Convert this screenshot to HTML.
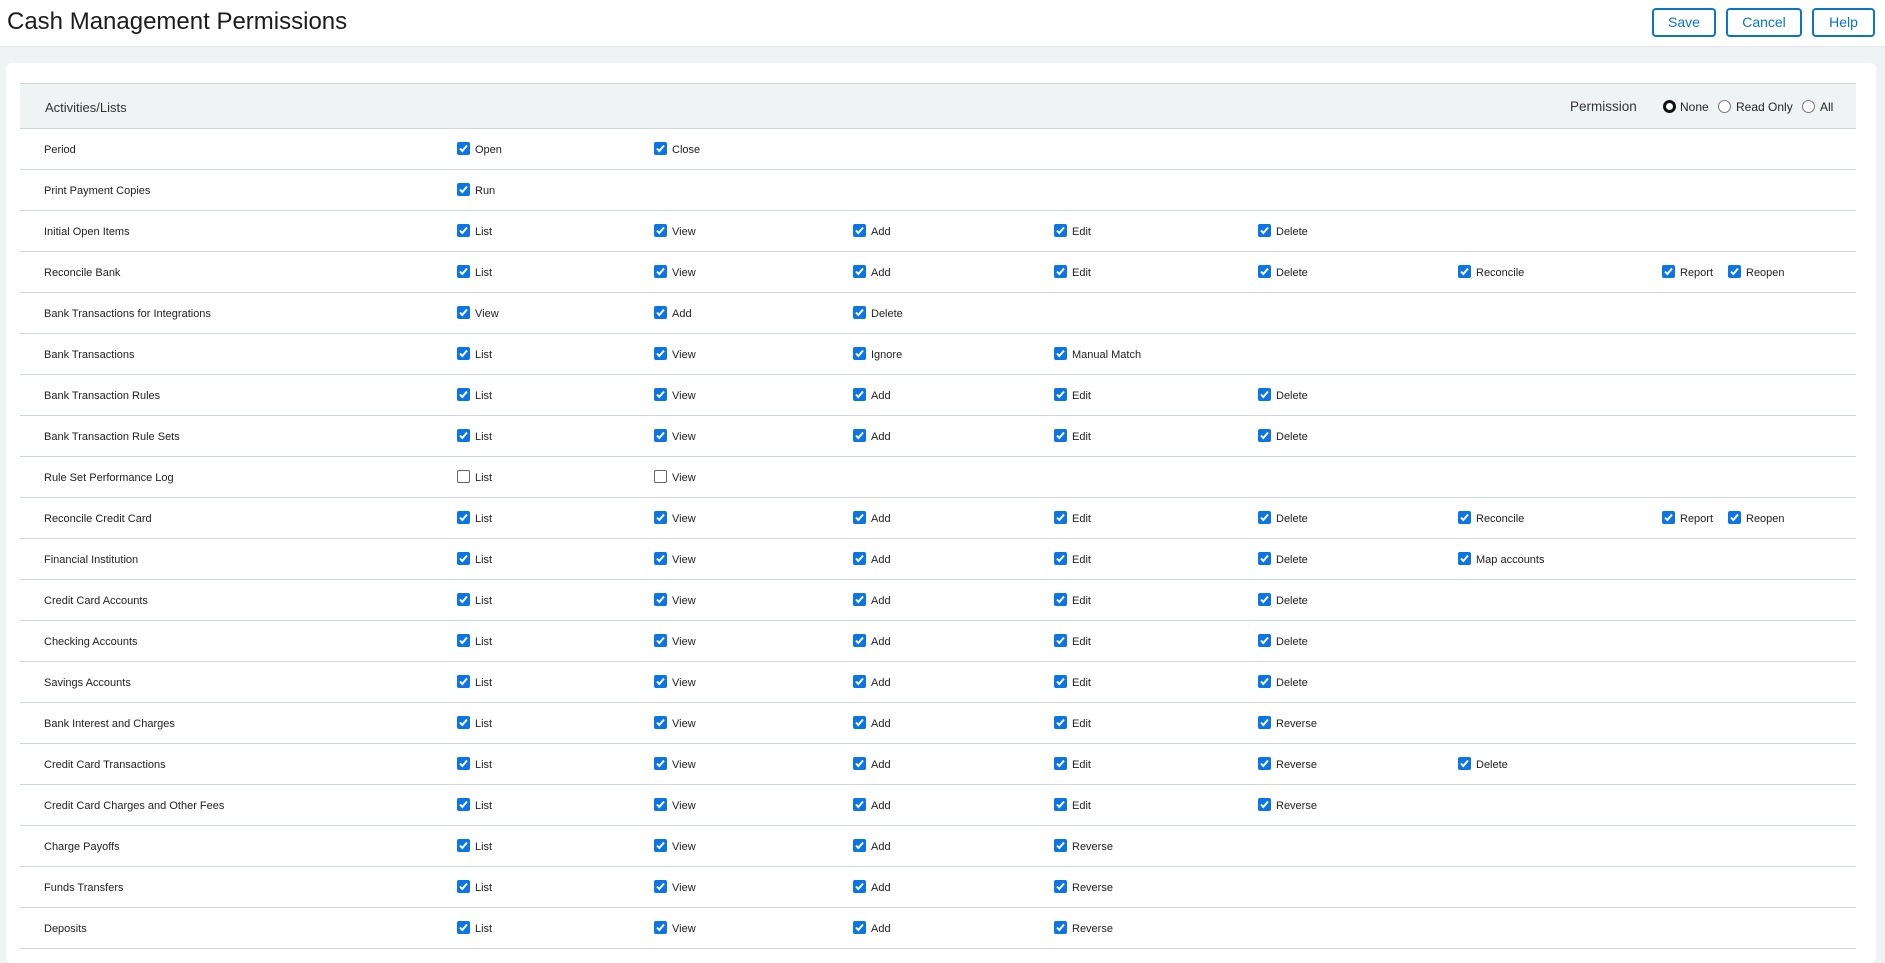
<!DOCTYPE html>
<html><head><meta charset="utf-8"><style>
*{box-sizing:border-box;margin:0;padding:0}
body{width:1885px;height:944px;overflow:hidden;background:#f0f3f4;font-family:"Liberation Sans",Arial,sans-serif;color:#222;position:relative}
.top{position:absolute;left:0;top:0;width:1885px;height:47px;background:#fff;border-bottom:1px solid #e2e6e8}
.top h1{position:absolute;left:7px;top:8px;font-size:24px;font-weight:normal;color:#1c1c1c}
.btn{position:absolute;top:8px;height:29px;border:2px solid #0a74c9;border-radius:4px;color:#0a74c9;font-size:14px;text-align:center;line-height:25px;background:#fff}
.card{position:absolute;left:6px;top:63px;width:1870px;height:900px;background:#fff;border-radius:5px}
.hdr{position:absolute;left:20px;top:83px;width:1836px;height:46px;background:#f0f3f4;border-top:1px solid #d0d6da;border-bottom:1px solid #d0d6da;font-size:13px}
.row{position:absolute;left:20px;width:1836px;height:41px;border-bottom:1px solid #d0d6da;font-size:11px}
.row span{position:absolute;top:15px;white-space:nowrap}
.cb{position:absolute;top:13px;width:13px;height:13px;border-radius:2px;background:#0b75e6}
.cb svg{position:absolute;left:1px;top:1px}
.cb.off{background:#fff;border:1px solid #666}
.rad{position:absolute;top:16px;width:13px;height:13px;border-radius:50%;border:1px solid #777;background:#fff}
</style></head><body>
<div class="top"><h1>Cash Management Permissions</h1>
<div class="btn" style="left:1652px;width:64px">Save</div>
<div class="btn" style="left:1726px;width:76px">Cancel</div>
<div class="btn" style="left:1812px;width:63px">Help</div></div>
<div class="card"></div>
<div class="hdr"><span style="position:absolute;left:25px;top:16px;color:#333">Activities/Lists</span>
<span style="position:absolute;left:1550px;top:15px;color:#333;font-size:13.5px">Permission</span>
<div class="rad" style="left:1643px;border:3px solid #111"></div><span style="position:absolute;left:1660px;top:16px;font-size:12px">None</span>
<div class="rad" style="left:1698px"></div><span style="position:absolute;left:1716px;top:16px;font-size:12px">Read Only</span>
<div class="rad" style="left:1782px"></div><span style="position:absolute;left:1800px;top:16px;font-size:12px">All</span>
</div>
<div id="rows"></div>
<script>
var X=[457,654,853,1054,1258,1458,1662,1728];
var R=[["Period",["Open","Close"]],["Print Payment Copies",["Run"]],["Initial Open Items",["List","View","Add","Edit","Delete"]],["Reconcile Bank",["List","View","Add","Edit","Delete","Reconcile","Report","Reopen"]],["Bank Transactions for Integrations",["View","Add","Delete"]],["Bank Transactions",["List","View","Ignore","Manual Match"]],["Bank Transaction Rules",["List","View","Add","Edit","Delete"]],["Bank Transaction Rule Sets",["List","View","Add","Edit","Delete"]],["Rule Set Performance Log",["List","View"],1],["Reconcile Credit Card",["List","View","Add","Edit","Delete","Reconcile","Report","Reopen"]],["Financial Institution",["List","View","Add","Edit","Delete","Map accounts"]],["Credit Card Accounts",["List","View","Add","Edit","Delete"]],["Checking Accounts",["List","View","Add","Edit","Delete"]],["Savings Accounts",["List","View","Add","Edit","Delete"]],["Bank Interest and Charges",["List","View","Add","Edit","Reverse"]],["Credit Card Transactions",["List","View","Add","Edit","Reverse","Delete"]],["Credit Card Charges and Other Fees",["List","View","Add","Edit","Reverse"]],["Charge Payoffs",["List","View","Add","Reverse"]],["Funds Transfers",["List","View","Add","Reverse"]],["Deposits",["List","View","Add","Reverse"]]];
var h="",ck='<svg width="11" height="11" viewBox="0 0 11 11"><path d="M2 5.5l2.3 2.5L9 2.5" stroke="#fff" stroke-width="2" fill="none"/></svg>';
R.forEach(function(r,i){h+='<div class="row" style="top:'+(129+i*41)+'px"><span style="left:24px">'+r[0]+'</span>';
r[1].forEach(function(l,j){var x=X[j]-20;h+='<div class="cb'+(r[2]?' off':'')+'" style="left:'+x+'px">'+(r[2]?'':ck)+'</div><span style="left:'+(x+18)+'px">'+l+'</span>';});h+='</div>';});
document.getElementById("rows").innerHTML=h;
</script>
</body></html>
